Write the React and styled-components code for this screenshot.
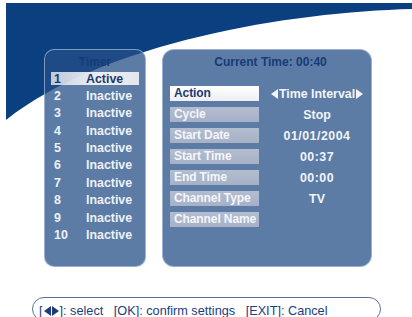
import React from 'react';
import styled, { createGlobalStyle } from 'styled-components';

const GlobalStyle = createGlobalStyle`
  html, body {
    margin: 0;
    padding: 0;
    background: #ffffff;
  }
  body {
    font-family: "Liberation Sans", Arial, sans-serif;
  }
`;

const Screen = styled.div`
  position: relative;
  width: 412px;
  height: 317px;
  overflow: hidden;
  background: #ffffff;
`;

const Wave = styled.svg`
  position: absolute;
  top: 0;
  left: 0;
  z-index: 0;
`;

const Content = styled.div`
  position: relative;
  z-index: 1;
  display: flex;
  flex-direction: column;
`;

const Panels = styled.div`
  display: flex;
  flex-direction: row;
  gap: 16px;
  padding: 49px 0 0 44px;
`;

const Panel = styled.div`
  box-sizing: border-box;
  width: ${(p) => p.$width}px;
  height: 218px;
  border: 1px solid rgba(205, 218, 238, 0.55);
  border-radius: ${(p) => p.$radius}px;
  background: rgba(38, 80, 136, 0.75);
  padding: ${(p) => p.$padding};
  display: flex;
  flex-direction: column;
`;

const Title = styled.div`
  font-size: 12px;
  font-weight: bold;
  line-height: 13px;
  color: #183a78;
  text-align: center;
  margin-bottom: ${(p) => p.$gap}px;
`;

const List = styled.div`
  display: flex;
  flex-direction: column;
  gap: 4.4px;
`;

const TimerRow = styled.div`
  display: flex;
  align-items: center;
  height: 13px;
  padding-left: 3px;
  font-size: 12.4px;
  font-weight: bold;
  color: ${(p) => (p.$active ? '#1d3a70' : '#eef1f8')};
  background: ${(p) =>
    p.$active
      ? 'linear-gradient(90deg, rgba(235,237,243,0.78) 0%, rgba(244,244,248,0.95) 55%, rgba(236,236,240,0.95) 100%)'
      : 'transparent'};
`;

const Num = styled.span`
  width: 32px;
  flex: none;
`;

const SettingRows = styled.div`
  display: flex;
  flex-direction: column;
  gap: 6px;
`;

const SettingRow = styled.div`
  display: flex;
  align-items: center;
  height: 15px;
`;

const Label = styled.div`
  box-sizing: border-box;
  width: 89px;
  height: 15px;
  flex: none;
  padding-left: 4px;
  font-size: 12px;
  font-weight: bold;
  line-height: 15px;
  letter-spacing: -0.1px;
  white-space: nowrap;
  overflow: hidden;
  color: ${(p) => (p.$active ? '#1c3a70' : '#f4f6fb')};
  background: ${(p) =>
    p.$active
      ? 'linear-gradient(180deg, #ffffff 0%, #eeeff3 100%)'
      : 'linear-gradient(180deg, #b3bdd0 0%, #a6b1c7 100%)'};
`;

const Value = styled.div`
  flex: 1;
  display: flex;
  justify-content: center;
  align-items: center;
  gap: 1px;
  padding-left: 4px;
  font-size: 12.4px;
  font-weight: bold;
  color: #f2f4fa;
  letter-spacing: ${(p) => (p.$spaced ? '0.5px' : '0')};
  white-space: nowrap;
`;

const Arrow = styled.span`
  display: inline-block;
  width: 0;
  height: 0;
  border-top: ${(p) => p.$size}px solid transparent;
  border-bottom: ${(p) => p.$size}px solid transparent;
  ${(p) =>
    p.$dir === 'left'
      ? `border-right: ${p.$size + 2}px solid ${p.$color};`
      : `border-left: ${p.$size + 2}px solid ${p.$color};`}
`;

const Footer = styled.div`
  box-sizing: border-box;
  margin: 30px 0 0 32px;
  width: 349px;
  height: 24px;
  border: 1px solid #5b7098;
  border-radius: 12px;
  padding: 3px 0 0 6px;
  display: flex;
  align-items: center;
  font-size: 12.7px;
  line-height: 16px;
  color: #1c3d7b;
  white-space: pre;
`;

const Keys = styled.span`
  display: inline-flex;
  align-items: center;
  gap: 1px;
  padding: 0 1px;
`;

const timers = Array.from({ length: 10 }, (_, i) => ({
  n: i + 1,
  state: i === 0 ? 'Active' : 'Inactive',
}));

const settings = [
  { label: 'Action', value: 'Time Interval', arrows: true, active: true },
  { label: 'Cycle', value: 'Stop' },
  { label: 'Start Date', value: '01/01/2004', spaced: true },
  { label: 'Start Time', value: '00:37', spaced: true },
  { label: 'End Time', value: '00:00', spaced: true },
  { label: 'Channel Type', value: 'TV' },
  { label: 'Channel Name', value: '' },
];

export default function App() {
  return (
    <Screen>
      <GlobalStyle />
      <Wave width="412" height="317" viewBox="0 0 412 317">
        <path d="M6,3 L412,3 L412,9 C290,12 105,42 6,120 Z" fill="#0a3f80" />
      </Wave>
      <Content>
        <Panels>
          <Panel $width={102} $radius={10} $padding="6px 6px 0 6px">
            <Title $gap={3}>Timer</Title>
            <List>
              {timers.map((t) => (
                <TimerRow key={t.n} $active={t.n === 1}>
                  <Num>{t.n}</Num>
                  {t.state}
                </TimerRow>
              ))}
            </List>
          </Panel>
          <Panel $width={210} $radius={12} $padding="6px 0 0 7px">
            <Title $gap={17}>Current Time: 00:40</Title>
            <SettingRows>
              {settings.map((s) => (
                <SettingRow key={s.label}>
                  <Label $active={s.active}>{s.label}</Label>
                  <Value $spaced={s.spaced}>
                    {s.arrows && <Arrow $dir="left" $size={5} $color="#f2f4fa" />}
                    {s.value}
                    {s.arrows && <Arrow $dir="right" $size={5} $color="#f2f4fa" />}
                  </Value>
                </SettingRow>
              ))}
            </SettingRows>
          </Panel>
        </Panels>
        <Footer>
          [<Keys>
            <Arrow $dir="left" $size={5} $color="#1c3d7b" />
            <Arrow $dir="right" $size={5} $color="#1c3d7b" />
          </Keys>]: select   [OK]: confirm settings   [EXIT]: Cancel
        </Footer>
      </Content>
    </Screen>
  );
}
